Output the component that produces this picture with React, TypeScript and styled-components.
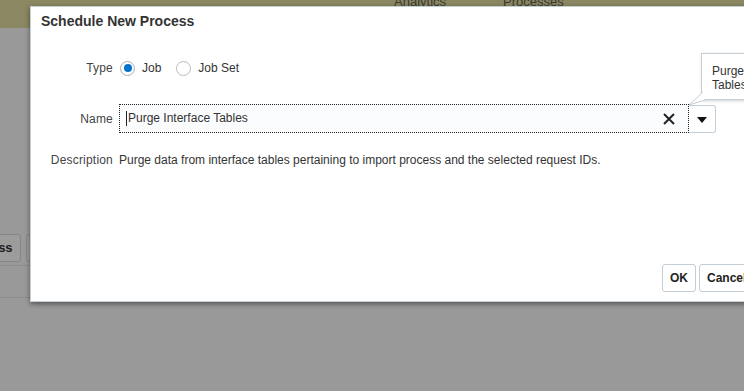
import { FunctionComponent } from 'react';
import styled, { createGlobalStyle } from 'styled-components';

const GlobalStyle = createGlobalStyle`
  html, body {
    margin: 0;
    padding: 0;
    width: 744px;
    height: 391px;
    overflow: hidden;
    background: #999999;
    font-family: 'Liberation Sans', Arial, sans-serif;
  }
`;

const Page = styled.div`
  position: relative;
  width: 744px;
  height: 391px;
  overflow: hidden;
  background: #999999;
`;

const HeaderBand = styled.div`
  height: 28px;
  background: #8a8762;
  display: flex;
  gap: 57px;
  padding-left: 394px;
  box-sizing: border-box;
`;

const NavTab = styled.span`
  font-size: 13px;
  line-height: 13px;
  color: #3a3a33;
  margin-top: -5px;
`;

const Content = styled.div`
  padding-top: 206px;
`;

const Toolbar = styled.div`
  display: flex;
  gap: 5px;
  margin-left: -46px;
  height: 28px;
`;

const BackButton = styled.div`
  box-sizing: border-box;
  height: 28px;
  padding: 0 7px;
  border: 1px solid #858585;
  border-radius: 3px;
  background: #9c9c9c;
  font-weight: bold;
  font-size: 13px;
  line-height: 26px;
  color: #1e1e1e;
  white-space: nowrap;
`;

const Divider = styled.div<{ $gap: number }>`
  margin-top: ${(p) => p.$gap}px;
  height: 1px;
  background: #8b8b8b;
`;

const Dialog = styled.div`
  position: absolute;
  left: 30px;
  top: 6px;
  width: 740px;
  height: 296px;
  box-sizing: border-box;
  background: #ffffff;
  border: 1px solid #c4ced7;
  box-shadow: 0 2px 5px rgba(0, 0, 0, 0.45);
  display: flex;
  flex-direction: column;
`;

const Title = styled.div`
  padding: 0 10px;
  height: 29px;
  line-height: 29px;
  font-size: 14px;
  font-weight: bold;
  color: #333333;
`;

const Body = styled.div`
  flex: 1;
  padding-top: 22px;
  display: flex;
  flex-direction: column;
`;

const Row = styled.div<{ $top: number; $height: number }>`
  display: flex;
  align-items: center;
  gap: 6px;
  margin-top: ${(p) => p.$top}px;
  height: ${(p) => p.$height}px;
`;

const Label = styled.label`
  width: 82px;
  text-align: right;
  font-size: 12px;
  letter-spacing: 0.2px;
  color: #444444;
  white-space: nowrap;
`;

const RadioGroup = styled.div`
  display: flex;
  align-items: center;
  margin-left: 1px;
`;

const RadioOption = styled.span`
  display: flex;
  align-items: center;
  gap: 7px;
  margin-right: 15px;
  font-size: 12px;
  color: #333333;
`;

const RadioCircle = styled.span<{ $checked?: boolean }>`
  box-sizing: border-box;
  width: 15px;
  height: 15px;
  border-radius: 50%;
  border: 1px solid ${(p) => (p.$checked ? '#9fb1c2' : '#b5bcc3')};
  background: #ffffff;
  display: flex;
  align-items: center;
  justify-content: center;

  &::after {
    content: '';
    display: ${(p) => (p.$checked ? 'block' : 'none')};
    width: 8px;
    height: 8px;
    border-radius: 50%;
    background: #0572ce;
  }
`;

const Combo = styled.div`
  display: flex;
  align-items: stretch;
  height: 29px;
`;

const InputBox = styled.div`
  box-sizing: border-box;
  width: 570px;
  border: 1px dotted #222222;
  background: #fbfcfe;
  display: flex;
  align-items: center;
  padding: 0 10px 0 6px;
`;

const InputText = styled.span`
  flex: 1;
  font-size: 12px;
  color: #333333;
  border-left: 1px solid #222222;
  padding-left: 1px;
  line-height: 15px;
`;

const ClearIcon = styled.svg`
  width: 14px;
  height: 14px;
  margin-right: 2px;
`;

const DropButton = styled.div`
  box-sizing: border-box;
  width: 27px;
  margin-top: 1px;
  border: 1px solid #c4ced7;
  border-left: none;
  border-radius: 0 3px 3px 0;
  background: #ffffff;
  display: flex;
  align-items: center;
  justify-content: center;
`;

const Arrow = styled.span`
  width: 0;
  height: 0;
  border-left: 5px solid transparent;
  border-right: 5px solid transparent;
  border-top: 6px solid #111111;
  margin-top: 1px;
`;

const DescText = styled.span`
  font-size: 12px;
  color: #333333;
`;

const Footer = styled.div`
  display: flex;
  gap: 3px;
  padding: 0 0 9px 631px;
`;

const FooterButton = styled.button`
  box-sizing: border-box;
  height: 28px;
  padding: 0 7px;
  border: 1px solid #c4ced7;
  border-radius: 3px;
  background: #ffffff;
  font-family: 'Liberation Sans', Arial, sans-serif;
  font-weight: bold;
  font-size: 12px;
  color: #222222;
  white-space: nowrap;
`;

const Tooltip = styled.div`
  position: absolute;
  left: 701px;
  top: 53px;
  width: 120px;
  height: 47px;
  box-sizing: border-box;
  padding: 10px 10px;
  background: #ffffff;
  border: 1px solid #c4ced7;
  box-shadow: 1px 1px 3px rgba(0, 0, 0, 0.18);
  font-size: 12px;
  line-height: 14px;
  color: #333333;
`;

const TooltipTail = styled.svg`
  position: absolute;
  left: -14px;
  top: 37px;
  width: 20px;
  height: 16px;
  overflow: visible;
`;

const App: FunctionComponent = () => {
  return (
    <Page>
      <GlobalStyle />
      <HeaderBand>
        <NavTab>Analytics</NavTab>
        <NavTab>Processes</NavTab>
      </HeaderBand>
      <Content>
        <Toolbar>
          <BackButton>Process</BackButton>
          <BackButton>Cancel Process</BackButton>
        </Toolbar>
        <Divider $gap={3} />
        <Divider $gap={31} />
      </Content>

      <Dialog>
        <Title>Schedule New Process</Title>
        <Body>
          <Row $top={0} $height={20}>
            <Label>Type</Label>
            <RadioGroup>
              <RadioOption>
                <RadioCircle $checked />
                Job
              </RadioOption>
              <RadioOption>
                <RadioCircle />
                Job Set
              </RadioOption>
            </RadioGroup>
          </Row>
          <Row $top={26} $height={29}>
            <Label>Name</Label>
            <Combo>
              <InputBox>
                <InputText>Purge Interface Tables</InputText>
                <ClearIcon viewBox="0 0 14 14">
                  <path d="M2 2 L12 12 M12 2 L2 12" stroke="#222" strokeWidth="2" fill="none" />
                </ClearIcon>
              </InputBox>
              <DropButton>
                <Arrow />
              </DropButton>
            </Combo>
          </Row>
          <Row $top={18} $height={18}>
            <Label>Description</Label>
            <DescText>
              Purge data from interface tables pertaining to import process and the selected request IDs.
            </DescText>
          </Row>
        </Body>
        <Footer>
          <FooterButton>OK</FooterButton>
          <FooterButton>Cancel</FooterButton>
        </Footer>
      </Dialog>

      <Tooltip>
        Purge Interface Tables
        <TooltipTail viewBox="0 0 20 16">
          <path d="M14 0 L14 2 L1 14 L17 9" fill="#ffffff" stroke="#c4ced7" strokeWidth="1" />
        </TooltipTail>
      </Tooltip>
    </Page>
  );
};

export default App;
